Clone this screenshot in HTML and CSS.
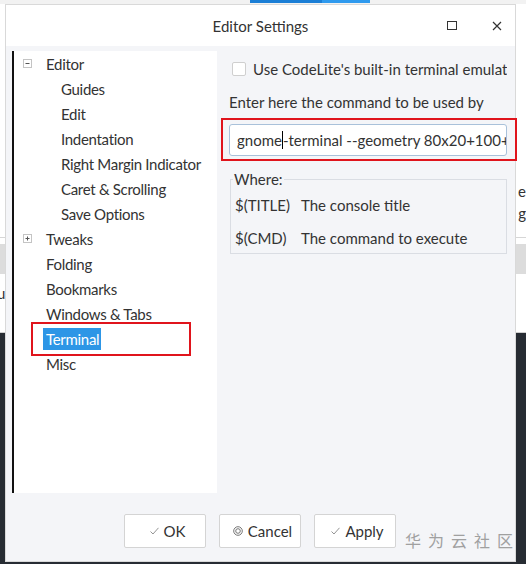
FILE: index.html
```html
<!DOCTYPE html>
<html>
<head>
<meta charset="utf-8">
<link rel="stylesheet" href="styles.css">
</head>
<body>
<div class="desktop">
  <div class="bg-top"><span class="bg-tab bg-tab-a"></span><span class="bg-tab bg-tab-b"></span></div>
  <div class="bg-white1"><span class="bg-char-r1">e</span><span class="bg-char-r2">g</span></div>
  <div class="bg-band"></div>
  <div class="bg-white2"><span class="bg-char-l">u</span></div>
  <div class="bg-dark"></div>
</div>

<div class="dialog">
  <div class="titlebar">
    <span class="title">Editor Settings</span>
    <span class="tb-btn tb-max"><svg width="10" height="9" viewBox="0 0 10 9"><rect x="0.5" y="0.5" width="9" height="8" fill="none" stroke="#333" stroke-width="1"/></svg></span>
    <span class="tb-btn tb-close"><svg width="10" height="10" viewBox="0 0 10 10"><path d="M1 1 L9 9 M9 1 L1 9" stroke="#333" stroke-width="1.2"/></svg></span>
  </div>
  <div class="body">
    <div class="main">
      <div class="tree">
        <div class="row top"><span class="exp"><svg width="9" height="9" viewBox="0 0 9 9"><rect x="0.5" y="0.5" width="8" height="8" fill="#fff" stroke="#c4c4c4"/><path d="M2.5 4.5 H6.5" stroke="#555"/></svg></span><span class="lbl">Editor</span></div>
        <div class="row child"><span class="lbl">Guides</span></div>
        <div class="row child"><span class="lbl">Edit</span></div>
        <div class="row child"><span class="lbl">Indentation</span></div>
        <div class="row child"><span class="lbl">Right Margin Indicator</span></div>
        <div class="row child"><span class="lbl">Caret &amp; Scrolling</span></div>
        <div class="row child"><span class="lbl">Save Options</span></div>
        <div class="row top"><span class="exp"><svg width="9" height="9" viewBox="0 0 9 9"><rect x="0.5" y="0.5" width="8" height="8" fill="#fff" stroke="#c4c4c4"/><path d="M2.5 4.5 H6.5 M4.5 2.5 V6.5" stroke="#555"/></svg></span><span class="lbl">Tweaks</span></div>
        <div class="row top"><span class="exp-space"></span><span class="lbl">Folding</span></div>
        <div class="row top"><span class="exp-space"></span><span class="lbl">Bookmarks</span></div>
        <div class="row top"><span class="exp-space"></span><span class="lbl">Windows &amp; Tabs</span></div>
        <div class="row top sel-row"><span class="exp-space"></span><span class="lbl sel">Terminal</span><span class="mark mark-tree"></span></div>
        <div class="row top"><span class="exp-space"></span><span class="lbl">Misc</span></div>
      </div>
      <div class="panel">
        <label class="check-row"><span class="checkbox"></span><span class="check-text">Use CodeLite's built-in terminal emulator</span></label>
        <div class="cmd-label">Enter here the command to be used by</div>
        <div class="input-wrap">
          <div class="input"><span>gnome</span><span class="caret"></span><span>-terminal --geometry 80x20+100+0 -t "$(TITLE)" -x /bin/bash -c '$(CMD)'</span></div>
          <span class="mark mark-input"></span>
        </div>
        <fieldset class="where">
          <legend>Where:</legend>
          <div class="where-row"><span class="var">$(TITLE)</span><span>The console title</span></div>
          <div class="where-row"><span class="var">$(CMD)</span><span>The command to execute</span></div>
        </fieldset>
      </div>
    </div>
    <div class="buttons">
      <button class="btn"><span class="ico"><svg width="9" height="8" viewBox="0 0 9 8"><path d="M0.5 4.5 L3 7 L8.5 0.8" fill="none" stroke="#888" stroke-width="0.9"/></svg></span>OK</button>
      <button class="btn"><span class="ico"><svg width="10" height="10" viewBox="0 0 10 10"><circle cx="5" cy="5" r="4.3" fill="none" stroke="#666" stroke-width="0.9"/><circle cx="5" cy="5" r="2.3" fill="none" stroke="#666" stroke-width="0.9"/></svg></span>Cancel</button>
      <button class="btn"><span class="ico"><svg width="9" height="8" viewBox="0 0 9 8"><path d="M0.5 4.5 L3 7 L8.5 0.8" fill="none" stroke="#888" stroke-width="0.9"/></svg></span>Apply</button>
      <span class="watermark">华为云社区</span>
    </div>
  </div>
</div>
</body>
</html>
```
FILE: styles.css
```css
html, body {
  margin: 0;
  padding: 0;
  width: 526px;
  height: 564px;
  overflow: hidden;
  font-family: Lato, "Noto Sans", sans-serif;
  color: #333;
}

/* background window behind the dialog */
.desktop {
  position: absolute;
  left: 0;
  top: 0;
  width: 526px;
  height: 564px;
  display: flex;
  flex-direction: column;
  background: #fff;
}
.bg-top {
  height: 4px;
  position: relative;
  background: #f2f2f2;
}
.bg-tab {
  position: absolute;
  top: 0;
  height: 3px;
}
.bg-tab-a { left: 250px; width: 72px; background: #1b7fd6; }
.bg-tab-b { left: 322px; width: 48px; background: #2f9aee; }
.bg-white1 {
  height: 233px;
  position: relative;
  border-bottom: 1px solid #d6d6d6;
  font-size: 15px;
}
.bg-char-r1 { position: absolute; right: 0; top: 178px; }
.bg-char-r2 { position: absolute; right: 0; top: 200px; }
.bg-band {
  height: 30px;
  margin-top: 6px;
  background: #dcdcdc;
}
.bg-white2 {
  height: 58px;
  position: relative;
  border-bottom: 1px solid #d0d0d0;
  font-size: 15px;
}
.bg-char-l { position: absolute; left: -3px; top: 10px; }
.bg-dark {
  flex: 1;
  background: #272c33;
}

/* dialog */
.dialog {
  position: absolute;
  left: 5px;
  top: 4px;
  width: 509px;
  height: 556px;
  border: 1px solid #d9d9d9;
  background: #f4f5f8;
  display: flex;
  flex-direction: column;
}
.titlebar {
  height: 41px;
  background: #fff;
  position: relative;
  display: flex;
  align-items: center;
  justify-content: center;
}
.title {
  font-size: 15px;
  color: #333;
}
.tb-btn {
  position: absolute;
  top: 16px;
  width: 10px;
  height: 10px;
  display: flex;
}
.tb-max { left: 441px; }
.tb-close { left: 486px; }

.body {
  flex: 1;
  display: flex;
  flex-direction: column;
  padding: 5px 8px 0 6px;
}
.main {
  display: flex;
  gap: 12px;
  height: 442px;
}
.tree {
  background: #fff;
  border-left: 2px solid #111;
  box-sizing: border-box;
  width: 205px;
  flex: none;
}
.row {
  height: 25px;
  display: flex;
  align-items: center;
  font-size: 15px;
  letter-spacing: -0.3px;
  position: relative;
}
.row.top { padding-left: 9px; }
.row.child { padding-left: 45px; }
.exp {
  width: 9px;
  height: 9px;
  display: flex;
  margin-right: 12px;
}
.exp-space {
  width: 9px;
  margin-right: 12px;
}
.lbl {
  line-height: 22px;
  padding: 0 2px;
  white-space: nowrap;
}
.lbl.sel {
  background: #2d96e6;
  color: #fff;
  margin-left: -1px;
  padding: 0 2px 0 3px;
}
.mark {
  position: absolute;
  border: 2px solid #e0141c;
  box-sizing: border-box;
}
.mark-tree {
  left: 17px;
  top: -4px;
  width: 160px;
  height: 34px;
}

.panel {
  flex: 1;
  display: flex;
  flex-direction: column;
  padding-top: 10px;
  min-width: 0;
}
.check-row {
  display: flex;
  align-items: center;
  height: 16px;
  white-space: nowrap;
  font-size: 15px;
  padding-left: 3px;
  overflow: hidden;
}
.checkbox {
  width: 14px;
  height: 14px;
  border: 1px solid #cfcfcf;
  border-radius: 2px;
  background: #fff;
  box-sizing: border-box;
  margin-right: 7px;
  flex: none;
}
.cmd-label {
  font-size: 15px;
  margin-top: 15px;
  white-space: nowrap;
  overflow: hidden;
  line-height: 20px;
}
.input-wrap {
  position: relative;
  margin-top: 12px;
}
.input {
  height: 32px;
  box-sizing: border-box;
  border: 1px solid #a9c1da;
  border-radius: 3px;
  background: #fff;
  font-size: 15px;
  display: flex;
  align-items: center;
  padding-left: 7px;
  white-space: nowrap;
  overflow: hidden;
}
.caret {
  width: 1px;
  height: 18px;
  background: #000;
  flex: none;
}
.mark-input {
  left: -8px;
  top: -6px;
  width: 296px;
  height: 43px;
}
.where {
  margin: 15px 0 0 1px;
  padding: 1px 4px 0 4px;
  border: 1px solid #dadde3;
  font-size: 15px;
  height: 83px;
  box-sizing: border-box;
}
.where legend {
  padding: 0 1px;
  margin-left: -2px;
  font-size: 15px;
  line-height: 16px;
}
.where-row {
  display: flex;
  height: 33px;
  align-items: center;
  white-space: nowrap;
}
.where-row .var {
  width: 66px;
}

.buttons {
  position: relative;
  display: flex;
  justify-content: center;
  gap: 13px;
  margin-top: 21px;
}
.btn {
  width: 82px;
  height: 34px;
  background: #fff;
  border: 1px solid #d4d4d4;
  border-radius: 2px;
  font-family: Lato, "Noto Sans", sans-serif;
  font-size: 15px;
  color: #333;
  display: flex;
  align-items: center;
  justify-content: center;
  padding: 0 0 0 6px;
}
.ico {
  margin-right: 5px;
  display: inline-flex;
}
.watermark {
  position: absolute;
  left: 393px;
  top: 14px;
  white-space: nowrap;
  font-family: "Noto Sans CJK SC", sans-serif;
  font-size: 16px;
  letter-spacing: 7px;
  color: #a0a0a0;
}
```
